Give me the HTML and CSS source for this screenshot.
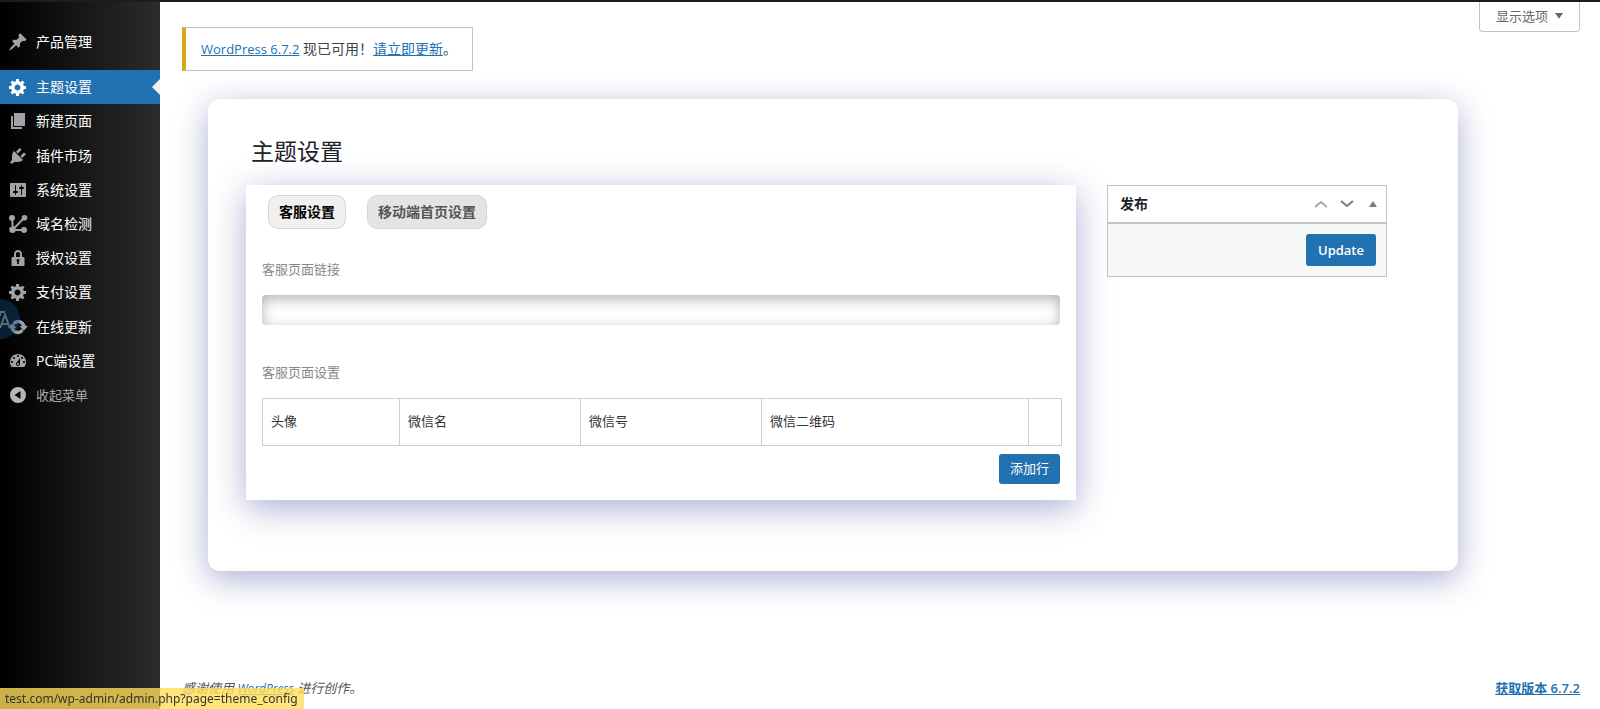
FILE: index.html
```html
<!DOCTYPE html>
<html lang="zh-CN">
<head>
<meta charset="utf-8">
<title>主题设置</title>
<link rel="stylesheet" href="styles.css">
</head>
<body>
<div class="admin-bar"></div>
<div class="layout">
  <nav class="sidebar">
    <ul class="menu menu-first">
      <li><a class="menu-item" href="#"><svg class="icon" viewBox="0 0 20 20"><path d="M10.44 3.02l1.82-1.82 6.36 6.35-1.83 1.82c-1.05-.68-2.48-.57-3.41.36l-.75.75c-.92.93-1.04 2.35-.35 3.41l-1.83 1.82-2.41-2.41-2.8 2.79c-.42.42-3.38 2.71-3.8 2.29s1.86-3.39 2.28-3.81l2.79-2.79L4.1 9.36l1.83-1.82c1.05.69 2.48.57 3.4-.36l.75-.75c.93-.92 1.05-2.35.36-3.41z"/></svg>产品管理</a></li>
    </ul>
    <ul class="menu">
      <li><a class="menu-item current" href="#"><svg class="icon" viewBox="0 0 20 20"><path d="M18 12h-2.18c-.17.7-.44 1.35-.81 1.93l1.54 1.54-2.1 2.1-1.54-1.54c-.58.36-1.23.63-1.91.79V19H8v-2.18c-.68-.16-1.33-.43-1.91-.79l-1.54 1.54-2.12-2.12 1.54-1.54c-.36-.58-.63-1.23-.79-1.91H1V9.03h2.17c.16-.7.44-1.35.8-1.94L2.43 5.55l2.1-2.1 1.54 1.54c.58-.37 1.24-.64 1.93-.81V2h3v2.18c.68.16 1.33.43 1.91.79l1.54-1.54 2.12 2.12-1.54 1.54c.36.59.64 1.24.8 1.94H18V12zm-8.5 1.5c1.66 0 3-1.34 3-3s-1.34-3-3-3-3 1.34-3 3 1.34 3 3 3z"/></svg>主题设置</a></li>
      <li><a class="menu-item" href="#"><svg class="icon" viewBox="0 0 20 20"><path d="M6 15V2h11v13H6zm-1 1h9v2H3V5h2v11z"/></svg>新建页面</a></li>
    </ul>
    <ul class="menu menu-group">
      <li><a class="menu-item" href="#"><svg class="icon" viewBox="0 0 20 20"><path d="M13.11 4.36L9.87 7.6 8 5.73l3.24-3.24c.35-.34 1.05-.2 1.56.32.52.51.66 1.21.31 1.55zm-8 1.77l.91-1.12 9.01 9.01-1.19.84c-.71.71-2.63 1.16-3.82 1.16H6.14L4.9 17.26c-.59.59-1.54.59-2.12 0-.59-.58-.59-1.53 0-2.12l1.24-1.24v-3.88c0-1.13.4-3.19 1.09-3.89zm7.26 3.97l3.24-3.24c.34-.35 1.04-.21 1.55.31.52.51.66 1.21.31 1.55l-3.24 3.25z"/></svg>插件市场</a></li>
      <li><a class="menu-item" href="#"><svg class="icon" viewBox="0 0 20 20"><path d="M18 16V4c0-.55-.45-1-1-1H3c-.55 0-1 .45-1 1v12c0 .55.45 1 1 1h14c.55 0 1-.45 1-1zM8 11h1c.55 0 1 .45 1 1s-.45 1-1 1H8v1.500c0 .28-.22.5-.5.5s-.5-.22-.5-.5V13H6c-.55 0-1-.45-1-1s.45-1 1-1h1V5.500c0-.28.22-.5.5-.5s.5.22.5.5V11zm5-2h-1c-.55 0-1-.45-1-1s.45-1 1-1h1V5.500c0-.28.22-.5.5-.5s.5.22.5.5V7h1c.55 0 1 .45 1 1s-.45 1-1 1h-1v5.500c0 .28-.22.5-.5.5s-.5-.22-.5-.5V9z"/></svg>系统设置</a></li>
      <li><a class="menu-item" href="#"><svg class="icon" viewBox="0 0 20 20"><path class="icon-line" d="M4 4l1 12h11M5 15.500L16 4"/><circle cx="4" cy="4" r="3"/><circle cx="16.500" cy="3.800" r="2.800"/><circle cx="4.500" cy="15.800" r="3.200"/><circle cx="16" cy="16" r="3"/></svg>域名检测</a></li>
      <li><a class="menu-item" href="#"><svg class="icon" viewBox="0 0 20 20"><path d="M14 9h1c.55 0 1.500.45 1.500 1v7c0 .55-.45 1-1 1h-11c-.55 0-1-.45-1-1v-7c0-.55.45-1 1-1H6V6c0-2.210 1.790-4 4-4s4 1.790 4 4v3zm-2 0V6c0-1.100-.9-2-2-2s-2 .9-2 2v3h4zm-1 7l-.36-2.150c.51-.24.86-.75.86-1.350 0-.83-.67-1.500-1.500-1.500s-1.500.67-1.500 1.500c0 .6.35 1.110.86 1.350L9 16h2z"/></svg>授权设置</a></li>
      <li><a class="menu-item" href="#"><svg class="icon" viewBox="0 0 20 20"><path d="M18 12h-2.18c-.17.7-.44 1.35-.81 1.93l1.54 1.54-2.1 2.1-1.54-1.54c-.58.36-1.23.63-1.91.79V19H8v-2.18c-.68-.16-1.33-.43-1.91-.79l-1.54 1.54-2.12-2.12 1.54-1.54c-.36-.58-.63-1.23-.79-1.91H1V9.03h2.17c.16-.7.44-1.35.8-1.94L2.43 5.55l2.1-2.1 1.54 1.54c.58-.37 1.24-.64 1.93-.81V2h3v2.18c.68.16 1.33.43 1.91.79l1.54-1.54 2.12 2.12-1.54 1.54c.36.59.64 1.24.8 1.94H18V12zm-8.5 1.5c1.66 0 3-1.34 3-3s-1.34-3-3-3-3 1.34-3 3 1.34 3 3 3z"/></svg>支付设置</a></li>
    </ul>
    <ul class="menu menu-group">
      <li><a class="menu-item" href="#"><svg class="icon" viewBox="0 0 20 20"><path class="icon-bold" d="M10.2 3.28c3.53 0 6.43 2.61 6.92 6h2.08l-3.5 4-3.5-4h2.32c-.45-1.97-2.21-3.45-4.32-3.45-1.45 0-2.73.71-3.54 1.78L4.95 5.66C6.23 4.2 8.11 3.28 10.2 3.28zm-.4 13.44c-3.52 0-6.43-2.61-6.92-6H.8l3.5-4c1.17 1.33 2.33 2.67 3.5 4H5.48c.45 1.97 2.21 3.45 4.32 3.45 1.45 0 2.73-.71 3.54-1.78l1.71 1.95c-1.28 1.46-3.15 2.38-5.25 2.38z"/></svg>在线更新</a></li>
      <li><a class="menu-item" href="#"><svg class="icon" viewBox="0 0 20 20"><path d="M3.76 16h12.48c1.1-1.37 1.76-3.11 1.76-5 0-4.42-3.58-8-8-8s-8 3.58-8 8c0 1.89.66 3.63 1.76 5zM10 4c.55 0 1 .45 1 1s-.45 1-1 1-1-.45-1-1 .45-1 1-1zM6 6c.55 0 1 .45 1 1s-.45 1-1 1-1-.45-1-1 .45-1 1-1zm8 0c.55 0 1 .45 1 1s-.45 1-1 1-1-.45-1-1 .45-1 1-1zm-5.370 5.550L12 7v6c0 1.100-.9 2-2 2s-2-.9-2-2c0-.57.24-1.080.63-1.450zM4 10c.55 0 1 .45 1 1s-.45 1-1 1-1-.45-1-1 .45-1 1-1zm12 0c.55 0 1 .45 1 1s-.45 1-1 1-1-.45-1-1 .45-1 1-1zm-5 3c0-.55-.45-1-1-1s-1 .45-1 1 .45 1 1 1 1-.45 1-1z"/></svg>PC端设置</a></li>
      <li><button class="menu-item collapse" type="button"><svg class="icon" viewBox="0 0 20 20"><path d="M10 2a8 8 0 1 0 0 16 8 8 0 0 0 0-16zm2.500 12L6.500 10l6-4z" fill-rule="evenodd"/></svg>收起菜单</button></li>
    </ul>
  </nav>

  <div class="content">
    <header class="top">
      <div class="notice"><a class="release" href="#">WordPress 6.7.2</a> 现已可用！<a href="#">请立即更新</a>。</div>
      <button class="screen-options" type="button">显示选项
        <svg class="caret" viewBox="0 0 10 8"><path d="M0 1h10L5 8z"/></svg>
      </button>
    </header>

    <main class="card">
      <h1 class="title">主题设置</h1>
      <div class="columns">
        <form class="panel">
          <div class="tabs">
            <button class="tab active" type="button">客服设置</button>
            <button class="tab" type="button">移动端首页设置</button>
          </div>
          <div class="field">
            <label class="label" for="service-link">客服页面链接</label>
            <input class="input" id="service-link" type="text">
          </div>
          <div class="field">
            <div class="label" id="service-rows">客服页面设置</div>
            <table class="table" aria-labelledby="service-rows">
              <colgroup><col class="col-avatar"><col class="col-name"><col class="col-name"><col><col class="col-handle"></colgroup>
              <tr><th>头像</th><th>微信名</th><th>微信号</th><th>微信二维码</th><th></th></tr>
            </table>
          </div>
          <div class="actions"><button class="primary add-row" type="button">添加行</button></div>
        </form>

        <aside class="publish">
          <div class="publish-head">
            <h2 class="publish-title">发布</h2>
            <button class="handle faded" type="button" aria-label="上移"><svg class="chevron" viewBox="0 0 14 8"><path d="M1 7l6-5 6 5"/></svg></button>
            <button class="handle" type="button" aria-label="下移"><svg class="chevron" viewBox="0 0 14 8"><path d="M1 1l6 5 6-5"/></svg></button>
            <button class="handle" type="button" aria-label="折叠"><svg class="toggle" viewBox="0 0 8 6"><path d="M0 6h8L4 0z"/></svg></button>
          </div>
          <div class="publish-body"><button class="primary update" type="button">Update</button></div>
        </aside>
      </div>
    </main>

    <footer class="footer">
      <span class="thanks">感谢使用 <a class="brand" href="#">WordPress</a> 进行创作。</span>
      <a class="version" href="#">获取版本 6.7.2</a>
    </footer>
  </div>
</div>
<div class="translate"><svg class="translate-glyph" viewBox="0 0 40 40"><path d="M14 13h11M20 13v4M20 29l5-13 5 13M22 25h6"/></svg></div>
<div class="status">test.com/wp-admin/admin.php?page=theme_config</div>
</body>
</html>
```
FILE: styles.css
```css
* { box-sizing: border-box; }
body {
  margin: 0;
  min-height: 100vh;
  display: flex;
  flex-direction: column;
  background: #fff;
  color: #3c434a;
  font: 13px/20px "Open Sans", "Noto Sans CJK SC", sans-serif;
}
button, input { font: inherit; color: inherit; }
button { cursor: pointer; }
a { color: #2271b1; }
.admin-bar { height: 2px; background: #1d1c1e; }
.layout { flex: 1; display: flex; }

.sidebar {
  width: 160px;
  flex: none;
  padding-top: 23px;
  background: linear-gradient(to right, #000, #2c2c2c);
}
.menu { margin: 0; padding: 0; list-style: none; }
.menu-first { margin-bottom: 11px; }
.menu-group { margin-top: 1px; }
.menu-item {
  position: relative;
  display: flex;
  align-items: center;
  gap: 8px;
  width: 100%;
  height: 34px;
  padding: 0 0 0 8px;
  color: #fff;
  font-size: 14px;
  text-decoration: none;
}
.icon { width: 20px; height: 20px; flex: none; fill: #a0a4a8; }
.icon-line { fill: none; stroke: #a0a4a8; stroke-width: 2; }
.icon-bold { stroke: #a0a4a8; stroke-width: 1; }
.current { background: #2271b1; }
.current .icon { fill: #fff; }
.current::after {
  content: "";
  position: absolute;
  right: 0;
  top: 9px;
  border: 8px solid transparent;
  border-left: 0;
  border-right-color: #f0f0f1;
}
.collapse { border: 0; background: none; color: #a7aaad; font-size: 13px; }
.collapse .icon { fill: #b4b7ba; }

.content { flex: 1; min-width: 0; display: flex; flex-direction: column; }
.top {
  display: flex;
  justify-content: space-between;
  align-items: flex-start;
  padding: 0 20px 0 22px;
}
.notice {
  margin-top: 25px;
  padding: 11px 15px;
  border: 1px solid #c3c4c7;
  border-left: 4px solid #dba617;
  background: #fff;
  font-size: 14px;
}
.release { font-size: 13px; }
.screen-options {
  display: flex;
  align-items: center;
  gap: 7px;
  height: 30px;
  padding: 0 16px 2px;
  border: 1px solid #c3c4c7;
  border-top: 0;
  border-radius: 0 0 4px 4px;
  background: #fff;
  color: #646970;
}
.caret { width: 8px; height: 7px; fill: #646970; }

.card {
  margin: 28px 142px 0 48px;
  padding: 36px 71px 71px 38px;
  border-radius: 12px;
  box-shadow: 0 8px 32px rgba(31, 38, 135, .37);
}
.title {
  margin: 0 0 17px;
  padding-left: 5px;
  color: #1d2327;
  font-size: 23px;
  font-weight: 400;
  line-height: 33px;
}
.columns { display: flex; align-items: flex-start; gap: 31px; }
.panel {
  flex: 1;
  min-width: 0;
  padding: 10px 16px 16px;
  background: #fff;
  box-shadow: 0 8px 32px rgba(31, 38, 135, .37);
}
.tabs { display: flex; align-items: flex-start; gap: 21px; padding-left: 6px; }
.tab {
  height: 34px;
  padding: 0 10px;
  border: 1px solid #d4d5d8;
  border-radius: 10px;
  background: #e4e4e4;
  color: #555;
  font-size: 14px;
  font-weight: 600;
}
.active { background: #f0f0f1; color: #000; }
.field { margin-top: 30px; }
.field + .field { margin-top: 37px; }
.label { display: block; margin-bottom: 16px; color: #888; }
.input {
  display: block;
  width: 100%;
  height: 30px;
  padding: 0 8px;
  border: 0;
  border-radius: 4px;
  outline: 0;
  background: #fff;
  box-shadow: inset 0 4px 14px rgba(0, 0, 0, .3);
}
.table {
  width: calc(100% + 2px);
  border-collapse: collapse;
  table-layout: fixed;
  border: 1px solid #c3c4c7;
}
.table th {
  height: 47px;
  padding: 0 8px 2px;
  border: 1px solid #ccd0d4;
  color: #333;
  font-weight: 400;
  text-align: left;
}
.col-avatar { width: 137px; }
.col-name { width: 181px; }
.col-handle { width: 33px; }
.actions { display: flex; justify-content: flex-end; margin-top: 8px; }
.primary { border: 0; border-radius: 3px; background: #2271b1; color: #fff; }
.add-row { height: 30px; padding: 0 11px 2px; }

.publish { width: 280px; flex: none; border: 1px solid #c3c4c7; background: #fff; }
.publish-head {
  display: flex;
  align-items: center;
  height: 38px;
  padding-left: 12px;
  border-bottom: 2px solid #c3c4c7;
}
.publish-title { flex: 1; margin: 0; color: #1d2327; font-size: 14px; font-weight: 600; }
.handle {
  display: flex;
  align-items: center;
  justify-content: center;
  width: 26px;
  height: 36px;
  padding: 0;
  border: 0;
  background: none;
}
.chevron { width: 14px; height: 8px; fill: none; stroke: #787c82; stroke-width: 2; }
.faded .chevron { stroke: #a7aaad; }
.toggle { width: 8px; height: 6px; fill: #787c82; }
.publish-body {
  display: flex;
  justify-content: flex-end;
  padding: 10px;
  background: #f6f7f7;
}
.update { height: 32px; padding: 0 12px; font-weight: 600; }

.footer {
  display: flex;
  justify-content: space-between;
  margin-top: auto;
  padding: 0 20px 10px 22px;
}
.thanks { font-style: italic; color: #50575e; }
.brand { font-size: 12px; }
.version { font-weight: 600; }

.translate {
  position: fixed;
  left: -20px;
  top: 299px;
  width: 40px;
  height: 40px;
  border-radius: 50%;
  background: rgba(20, 75, 130, .4);
}
.translate-glyph { width: 40px; height: 40px; fill: none; stroke: #5a6b7c; stroke-width: 2; }
.status {
  position: fixed;
  left: 0;
  bottom: 0;
  padding: 1px 6px 0 5px;
  background: rgba(255, 221, 87, .8);
  color: #333;
  font-family: "Noto Sans", sans-serif;
  font-size: 12px;
}
```
